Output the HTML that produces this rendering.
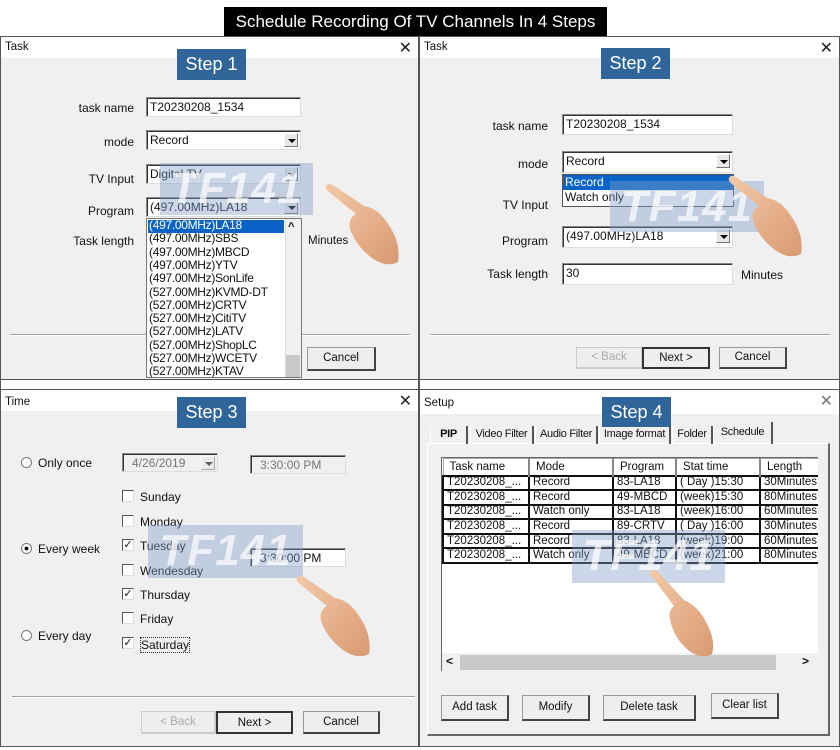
<!DOCTYPE html>
<html><head><meta charset="utf-8">
<style>
*{margin:0;padding:0;box-sizing:border-box}
body{width:840px;height:750px;background:#fff;position:relative;overflow:hidden;font-family:"Liberation Sans",Arial,sans-serif;font-size:12px;color:#111}
.a{position:absolute}
.panel{position:absolute;background:#f0f0f0;border:1px solid #555}
.tb{position:absolute;left:0;right:0;top:0;height:21px;background:#fff}
.tt{position:absolute;left:4px;top:4px;font-size:11.5px}
.x{position:absolute;right:6px;top:1px;font-size:16px;color:#222}
.step{position:absolute;background:#2f6599;color:#fff;font-size:18px;text-align:center;line-height:31px;width:69px;height:31px}
.lbl{position:absolute;text-align:right;font-size:12px}
.inp{position:absolute;background:#fff;border:1px solid #888;border-right-color:#ddd;border-bottom-color:#ddd;box-shadow:inset 1px 1px 0 #333;padding:1px 3px;font-size:12px;line-height:16px}
.dd{position:absolute;right:2px;top:2px;width:14px;height:14px;background:#e8e8e8;border:1px solid #777;border-left-color:#fff;border-top-color:#fff}
.dd:after{content:"";position:absolute;left:3px;top:5px;border-left:4px solid transparent;border-right:4px solid transparent;border-top:4px solid #000}
.btn{position:absolute;background:#eee;border:1px solid #999;border-right:2px solid #444;border-bottom:2px solid #444;text-align:center;font-size:11.5px}
.sep{position:absolute;height:2px;border-top:1px solid #a0a0a0;border-bottom:1px solid #fff}
.wm{position:absolute;background:rgba(130,160,200,0.42);color:rgba(255,255,255,0.7);font-style:italic;font-weight:bold;font-size:44px;line-height:52px;text-align:center;overflow:hidden;letter-spacing:1px}
.cb{position:absolute;width:12px;height:12px;background:#fff;border:1px solid #555;border-right-color:#ddd;border-bottom-color:#ddd;font-size:11px;line-height:10px;text-align:center}
.rd{position:absolute;width:11px;height:11px;border-radius:50%;border:1px solid #777;background:#fff}
.li{position:absolute;left:2px;font-size:12px;line-height:13.3px;letter-spacing:-0.3px}
table{border-collapse:collapse;font-size:11.5px}
td{border:2px solid #111;padding:0 3px;height:14.6px;line-height:11px;white-space:nowrap;background:#fff}
th{font-weight:normal;text-align:left;border:1px solid #aaa;border-right:2px solid #888;padding:0 6px;height:17px;background:#fff}
.tab{position:absolute;top:426px;height:18px;font-size:11px;line-height:17px;text-align:center;border-left:1px solid #fff;border-right:2px solid #555;white-space:nowrap;overflow:hidden;letter-spacing:-0.3px}
</style></head><body>

<div class="a" style="left:224px;top:7px;width:383px;height:29px;background:#000;color:#fff;font-size:17px;text-align:center;line-height:29px">Schedule Recording Of TV Channels In 4 Steps</div>

<!-- Panel 1 -->
<div class="panel" style="left:0;top:36px;width:419px;height:353px">
 <div class="tb"><span class="tt">Task</span><span class="x">✕</span></div>
 <div class="a" style="left:0;right:0;top:342px;height:10px;background:#fff;border-top:1px solid #555"></div>
</div>
<div class="step" style="left:177px;top:49px">Step 1</div>
<div class="lbl" style="left:40px;width:94px;top:101px">task name</div>
<div class="inp" style="left:146px;top:97px;width:155px;height:20px">T20230208_1534</div>
<div class="lbl" style="left:40px;width:94px;top:135px">mode</div>
<div class="inp" style="left:146px;top:130px;width:155px;height:20px">Record<div class="dd"></div></div>
<div class="lbl" style="left:40px;width:94px;top:172px">TV Input</div>
<div class="inp" style="left:146px;top:164px;width:155px;height:20px">Digital TV<div class="dd"></div></div>
<div class="lbl" style="left:40px;width:94px;top:204px">Program</div>
<div class="inp" style="left:146px;top:197px;width:155px;height:20px">(497.00MHz)LA18<div class="dd"></div></div>
<div class="lbl" style="left:40px;width:94px;top:234px">Task length</div>
<div class="a" style="left:308px;top:235px;font-size:11.5px">Minutes</div>
<div class="sep" style="left:10px;top:334px;width:400px"></div>
<div class="btn" style="left:307px;top:347px;width:69px;height:24px;line-height:21px">Cancel</div>
<div class="a" style="left:146px;top:218px;width:156px;height:160px;background:#fff;border:1px solid #777;overflow:hidden">
 <div class="a" style="left:1px;top:1px;width:136px;height:13px;background:#0a64c8"></div>
 <div class="li" style="top:0;color:#fff">(497.00MHz)LA18</div>
 <div class="li" style="top:13.3px">(497.00MHz)SBS</div>
 <div class="li" style="top:26.6px">(497.00MHz)MBCD</div>
 <div class="li" style="top:39.9px">(497.00MHz)YTV</div>
 <div class="li" style="top:53.2px">(497.00MHz)SonLife</div>
 <div class="li" style="top:66.5px">(527.00MHz)KVMD-DT</div>
 <div class="li" style="top:79.8px">(527.00MHz)CRTV</div>
 <div class="li" style="top:93.1px">(527.00MHz)CitiTV</div>
 <div class="li" style="top:106.4px">(527.00MHz)LATV</div>
 <div class="li" style="top:119.7px">(527.00MHz)ShopLC</div>
 <div class="li" style="top:133px">(527.00MHz)WCETV</div>
 <div class="li" style="top:146.3px">(527.00MHz)KTAV</div>
 <div class="a" style="left:138px;top:0;width:16px;height:160px;background:#f0f0f0;border-left:1px solid #ddd"></div>
 <div class="a" style="left:141px;top:2px;font-size:11px;font-weight:bold">^</div>
 <div class="a" style="left:139px;top:136px;width:14px;height:24px;background:#c8c8c8"></div>
</div>
<div class="wm" style="left:160px;top:163px;width:153px;height:52px">TF141</div>

<!-- Panel 2 -->
<div class="panel" style="left:419px;top:36px;width:421px;height:353px">
 <div class="tb"><span class="tt">Task</span><span class="x">✕</span></div>
 <div class="a" style="left:0;right:0;top:342px;height:10px;background:#fff;border-top:1px solid #555"></div>
</div>
<div class="step" style="left:601px;top:48px">Step 2</div>
<div class="lbl" style="left:450px;width:98px;top:119px">task name</div>
<div class="inp" style="left:562px;top:114px;width:171px;height:21px">T20230208_1534</div>
<div class="lbl" style="left:450px;width:98px;top:157px">mode</div>
<div class="inp" style="left:562px;top:151px;width:171px;height:22px">Record<div class="dd"></div></div>
<div class="a" style="left:562px;top:174px;width:172px;height:33px;background:#fff;border:1px solid #555">
 <div class="a" style="left:0;top:0;width:170px;height:15px;background:#0a64c8;color:#fff;padding-left:2px;line-height:15px">Record</div>
 <div class="a" style="left:2px;top:15px;line-height:15px">Watch only</div>
</div>
<div class="lbl" style="left:450px;width:98px;top:198px">TV Input</div>
<div class="lbl" style="left:450px;width:98px;top:234px">Program</div>
<div class="inp" style="left:562px;top:226px;width:171px;height:22px">(497.00MHz)LA18<div class="dd"></div></div>
<div class="lbl" style="left:450px;width:98px;top:267px">Task length</div>
<div class="inp" style="left:562px;top:263px;width:171px;height:22px">30</div>
<div class="a" style="left:741px;top:268px">Minutes</div>
<div class="sep" style="left:430px;top:334px;width:400px"></div>
<div class="btn" style="left:576px;top:347px;width:67px;height:22px;line-height:19px;color:#aaa;border-color:#ccc">&lt; Back</div>
<div class="btn" style="left:642px;top:347px;width:68px;height:22px;line-height:19px;border:2px solid #333">Next &gt;</div>
<div class="btn" style="left:719px;top:347px;width:68px;height:22px;line-height:19px">Cancel</div>
<div class="wm" style="left:610px;top:181px;width:154px;height:51px">TF141</div>

<!-- Panel 3 -->
<div class="panel" style="left:0;top:389px;width:419px;height:358px">
 <div class="tb"><span class="tt" style="top:6px">Time</span><span class="x">✕</span></div>
</div>
<div class="step" style="left:177px;top:397px">Step 3</div>
<div class="rd" style="left:21px;top:457px"></div><div class="a" style="left:38px;top:456px">Only once</div>
<div class="rd" style="left:21px;top:543px;background:radial-gradient(#000 25%,#fff 35%)"></div><div class="a" style="left:38px;top:542px">Every week</div>
<div class="rd" style="left:21px;top:630px"></div><div class="a" style="left:38px;top:629px">Every day</div>
<div class="inp" style="left:122px;top:453px;width:96px;height:19px;color:#777;background:#f0f0f0;padding-left:9px">4/26/2019<div class="dd" style="opacity:.6"></div></div>
<div class="inp" style="left:250px;top:455px;width:96px;height:19px;color:#777;background:#f0f0f0;padding-left:9px">3:30:00 PM</div>
<div class="inp" style="left:250px;top:548px;width:96px;height:19px;padding-left:9px">3:30:00 PM</div>
<div class="cb" style="left:122px;top:490px"></div><div class="a" style="left:140px;top:490px">Sunday</div>
<div class="cb" style="left:122px;top:515px"></div><div class="a" style="left:140px;top:515px">Monday</div>
<div class="cb" style="left:122px;top:539px">✓</div><div class="a" style="left:140px;top:539px">Tuesday</div>
<div class="cb" style="left:122px;top:564px"></div><div class="a" style="left:140px;top:564px">Wendesday</div>
<div class="cb" style="left:122px;top:588px">✓</div><div class="a" style="left:140px;top:588px">Thursday</div>
<div class="cb" style="left:122px;top:612px"></div><div class="a" style="left:140px;top:612px">Friday</div>
<div class="cb" style="left:122px;top:637px">✓</div><div class="a" style="left:140px;top:637px;border:1px dotted #333">Saturday</div>
<div class="sep" style="left:12px;top:696px;width:403px"></div>
<div class="btn" style="left:141px;top:711px;width:75px;height:23px;line-height:20px;color:#aaa;border-color:#ccc">&lt; Back</div>
<div class="btn" style="left:216px;top:711px;width:77px;height:23px;line-height:20px;border:2px solid #333">Next &gt;</div>
<div class="btn" style="left:303px;top:711px;width:77px;height:23px;line-height:20px">Cancel</div>
<div class="wm" style="left:148px;top:525px;width:155px;height:53px">TF141</div>

<!-- Panel 4 -->
<div class="panel" style="left:419px;top:389px;width:421px;height:358px">
 <div class="tb" style="height:24px"><span class="tt" style="top:7px">Setup</span><span class="x" style="color:#777">✕</span></div>
</div>
<div class="a" style="left:427px;top:443px;width:403px;height:293px;border:1px solid #fff;border-right:2px solid #666;border-bottom:2px solid #666"></div>
<div class="tab" style="left:430px;width:38px;font-weight:bold">PIP</div>
<div class="tab" style="left:470px;width:64px">Video Filter</div>
<div class="tab" style="left:535px;width:63px">Audio Filter</div>
<div class="tab" style="left:599px;width:72px">Image format</div>
<div class="tab" style="left:672px;width:41px">Folder</div>
<div class="tab" style="left:713px;width:60px;top:422px;height:22px;line-height:20px">Schedule</div>
<div class="step" style="left:602px;top:397px;height:30px;line-height:30px">Step 4</div>
<div class="a" style="left:441px;top:457px;width:377px;height:214px;background:#fff;border-left:1px solid #666;border-top:1px solid #666;overflow:hidden">
<table style="width:420px">
<tr><th style="width:86px">Task name</th><th style="width:84px">Mode</th><th style="width:63px">Program</th><th style="width:84px">Stat time</th><th>Length</th></tr>
<tr><td>T20230208_...</td><td>Record</td><td>83-LA18</td><td>( Day )15:30</td><td>30Minutes</td></tr>
<tr><td>T20230208_...</td><td>Record</td><td>49-MBCD</td><td>(week)15:30</td><td>80Minutes</td></tr>
<tr><td>T20230208_...</td><td>Watch only</td><td>83-LA18</td><td>(week)16:00</td><td>60Minutes</td></tr>
<tr><td>T20230208_...</td><td>Record</td><td>89-CRTV</td><td>( Day )16:00</td><td>30Minutes</td></tr>
<tr><td>T20230208_...</td><td>Record</td><td>83-LA18</td><td>(week)19:00</td><td>60Minutes</td></tr>
<tr><td>T20230208_...</td><td>Watch only</td><td>49-MBCD</td><td>(week)21:00</td><td>80Minutes</td></tr>
</table>
<div class="a" style="left:0;top:195px;width:377px;height:18px;background:#f0f0f0"></div>
<div class="a" style="left:4px;top:196px;font-weight:bold">&lt;</div>
<div class="a" style="left:18px;top:197px;width:316px;height:15px;background:#c8c8c8"></div>
<div class="a" style="left:360px;top:196px;font-weight:bold">&gt;</div>
</div>
<div class="btn" style="left:441px;top:695px;width:68px;height:26px;line-height:23px">Add task</div>
<div class="btn" style="left:522px;top:695px;width:68px;height:26px;line-height:23px">Modify</div>
<div class="btn" style="left:603px;top:695px;width:93px;height:26px;line-height:23px">Delete task</div>
<div class="btn" style="left:711px;top:693px;width:68px;height:26px;line-height:23px">Clear list</div>
<div class="wm" style="left:572px;top:530px;width:153px;height:53px">TF141</div>

<!-- hands -->
<svg class="a" style="left:0;top:0" width="840" height="750">
<defs><linearGradient id="sk" x1="0" y1="0" x2="1" y2="1"><stop offset="0" stop-color="#f3c9a8"/><stop offset="1" stop-color="#d99a72"/></linearGradient></defs>
<g fill="url(#sk)" stroke="none">
 <g transform="translate(326,184)">
  <path d="M0 2 Q2 -2 7 1 L38 22 Q52 24 62 40 Q75 58 72 78 Q60 84 46 74 Q30 62 24 45 Q22 34 30 30 L3 8 Q-1 5 0 2Z"/>
 </g>
 <g transform="translate(729,176)">
  <path d="M0 2 Q2 -2 7 1 L38 22 Q52 24 62 40 Q75 58 72 78 Q60 84 46 74 Q30 62 24 45 Q22 34 30 30 L3 8 Q-1 5 0 2Z"/>
 </g>
 <g transform="translate(297,576)">
  <path d="M0 2 Q2 -2 7 1 L38 22 Q52 24 62 40 Q75 58 72 78 Q60 84 46 74 Q30 62 24 45 Q22 34 30 30 L3 8 Q-1 5 0 2Z"/>
 </g>
 <g transform="translate(650,570)">
  <path d="M0 2 Q2 -2 7 1 L34 30 Q48 36 56 52 Q66 70 62 84 Q50 90 38 80 Q24 68 20 50 Q18 40 24 36 L3 8 Q-1 5 0 2Z"/>
 </g>
</g>
</svg>
</body></html>
